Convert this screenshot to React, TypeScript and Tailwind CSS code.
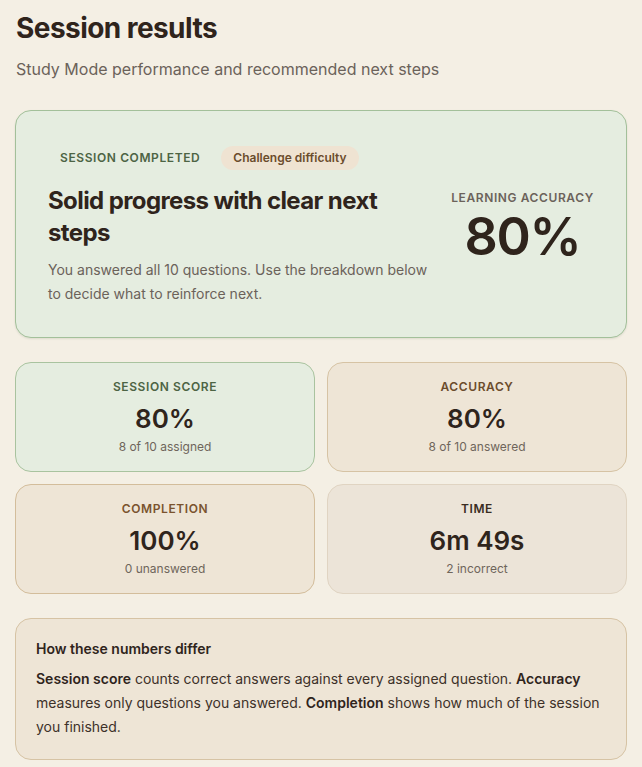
import type { ReactNode } from "react";

type Stat = {
  label: string;
  value: string;
  sub: string;
  box: string;
  labelColor: string;
};

const stats: Stat[] = [
  {
    label: "Session score",
    value: "80%",
    sub: "8 of 10 assigned",
    box: "border-[#a9c39f] bg-[#e5ede0]",
    labelColor: "text-[#4d6444]",
  },
  {
    label: "Accuracy",
    value: "80%",
    sub: "8 of 10 answered",
    box: "border-[#d6c3a4] bg-[#eee5d6]",
    labelColor: "text-[#6b4c2c]",
  },
  {
    label: "Completion",
    value: "100%",
    sub: "0 unanswered",
    box: "border-[#d3bd9b] bg-[#eee5d6]",
    labelColor: "text-[#7a532e]",
  },
  {
    label: "Time",
    value: "6m 49s",
    sub: "2 incorrect",
    box: "border-[#e0d4c2] bg-[#ece4d8]",
    labelColor: "text-[#3a2c22]",
  },
];

function StatCard({ stat }: { stat: Stat }) {
  return (
    <div className={`flex flex-col items-center rounded-2xl border px-4 pb-4 pt-4 ${stat.box}`}>
      <p className={`text-xs font-semibold uppercase leading-4 tracking-wider ${stat.labelColor}`}>
        {stat.label}
      </p>
      <p className="mt-2 text-[26px] font-semibold leading-8 text-[#2f241c]">{stat.value}</p>
      <p className="mt-1 text-xs leading-4 text-[#6f655b]">{stat.sub}</p>
    </div>
  );
}

function B({ children }: { children: ReactNode }) {
  return <span className="font-semibold text-[#2f241c]">{children}</span>;
}

export default function App() {
  return (
    <div className="min-h-screen bg-[#f4efe4] px-[15px] pb-6 pt-[10px] font-['Inter','Noto_Sans',sans-serif] text-[#2f241c]">
      {/* header */}
      <h1 className="px-px text-[28px] font-bold leading-9 tracking-[-0.02em]">Session results</h1>
      <p className="mt-[11px] px-px text-base leading-6 text-[#6b625a]">
        Study Mode performance and recommended next steps
      </p>

      {/* hero */}
      <section className="mt-[29px] flex items-center justify-between rounded-2xl border border-[#a3c09a] bg-[#e5ede0] px-8 pb-[31px] pt-[35px] shadow-[0_1px_2px_rgba(60,80,50,0.12)]">
        <div className="w-[392px]">
          <div className="flex items-center gap-[9px]">
            <span className="px-3 text-xs font-semibold uppercase leading-6 tracking-wider text-[#4d6444]">
              Session completed
            </span>
            <span className="rounded-full bg-[#efe3d2] px-3 text-xs font-semibold leading-6 text-[#6b4c2c]">
              Challenge difficulty
            </span>
          </div>
          <h2 className="mt-[15px] text-2xl font-bold leading-8 tracking-[-0.025em]">
            Solid progress with clear next steps
          </h2>
          <p className="mt-[9px] text-sm leading-6 text-[#6b625a]">
            You answered all 10 questions. Use the breakdown below to decide what to reinforce next.
          </p>
        </div>
        <div className="flex w-[143px] flex-col items-center">
          <p className="text-xs font-semibold uppercase leading-[18px] tracking-wider text-[#6b625a]">
            Learning accuracy
          </p>
          <p className="mt-[4px] text-[52px] font-semibold leading-[52px] tracking-tight">80%</p>
        </div>
      </section>

      {/* stats */}
      <div className="mt-6 grid grid-cols-2 gap-3">
        {stats.map((s) => (
          <StatCard key={s.label} stat={s} />
        ))}
      </div>

      {/* explainer */}
      <section className="mt-6 rounded-2xl border border-[#d6c3a4] bg-[#eee5d6] p-5">
        <p className="text-sm font-semibold leading-5">How these numbers differ</p>
        <p className="mt-2 text-sm leading-6 text-[#3d3129]">
          <B>Session score</B> counts correct answers against every assigned question. <B>Accuracy</B>{" "}
          measures only questions you answered. <B>Completion</B> shows how much of the session you
          finished.
        </p>
      </section>
    </div>
  );
}
